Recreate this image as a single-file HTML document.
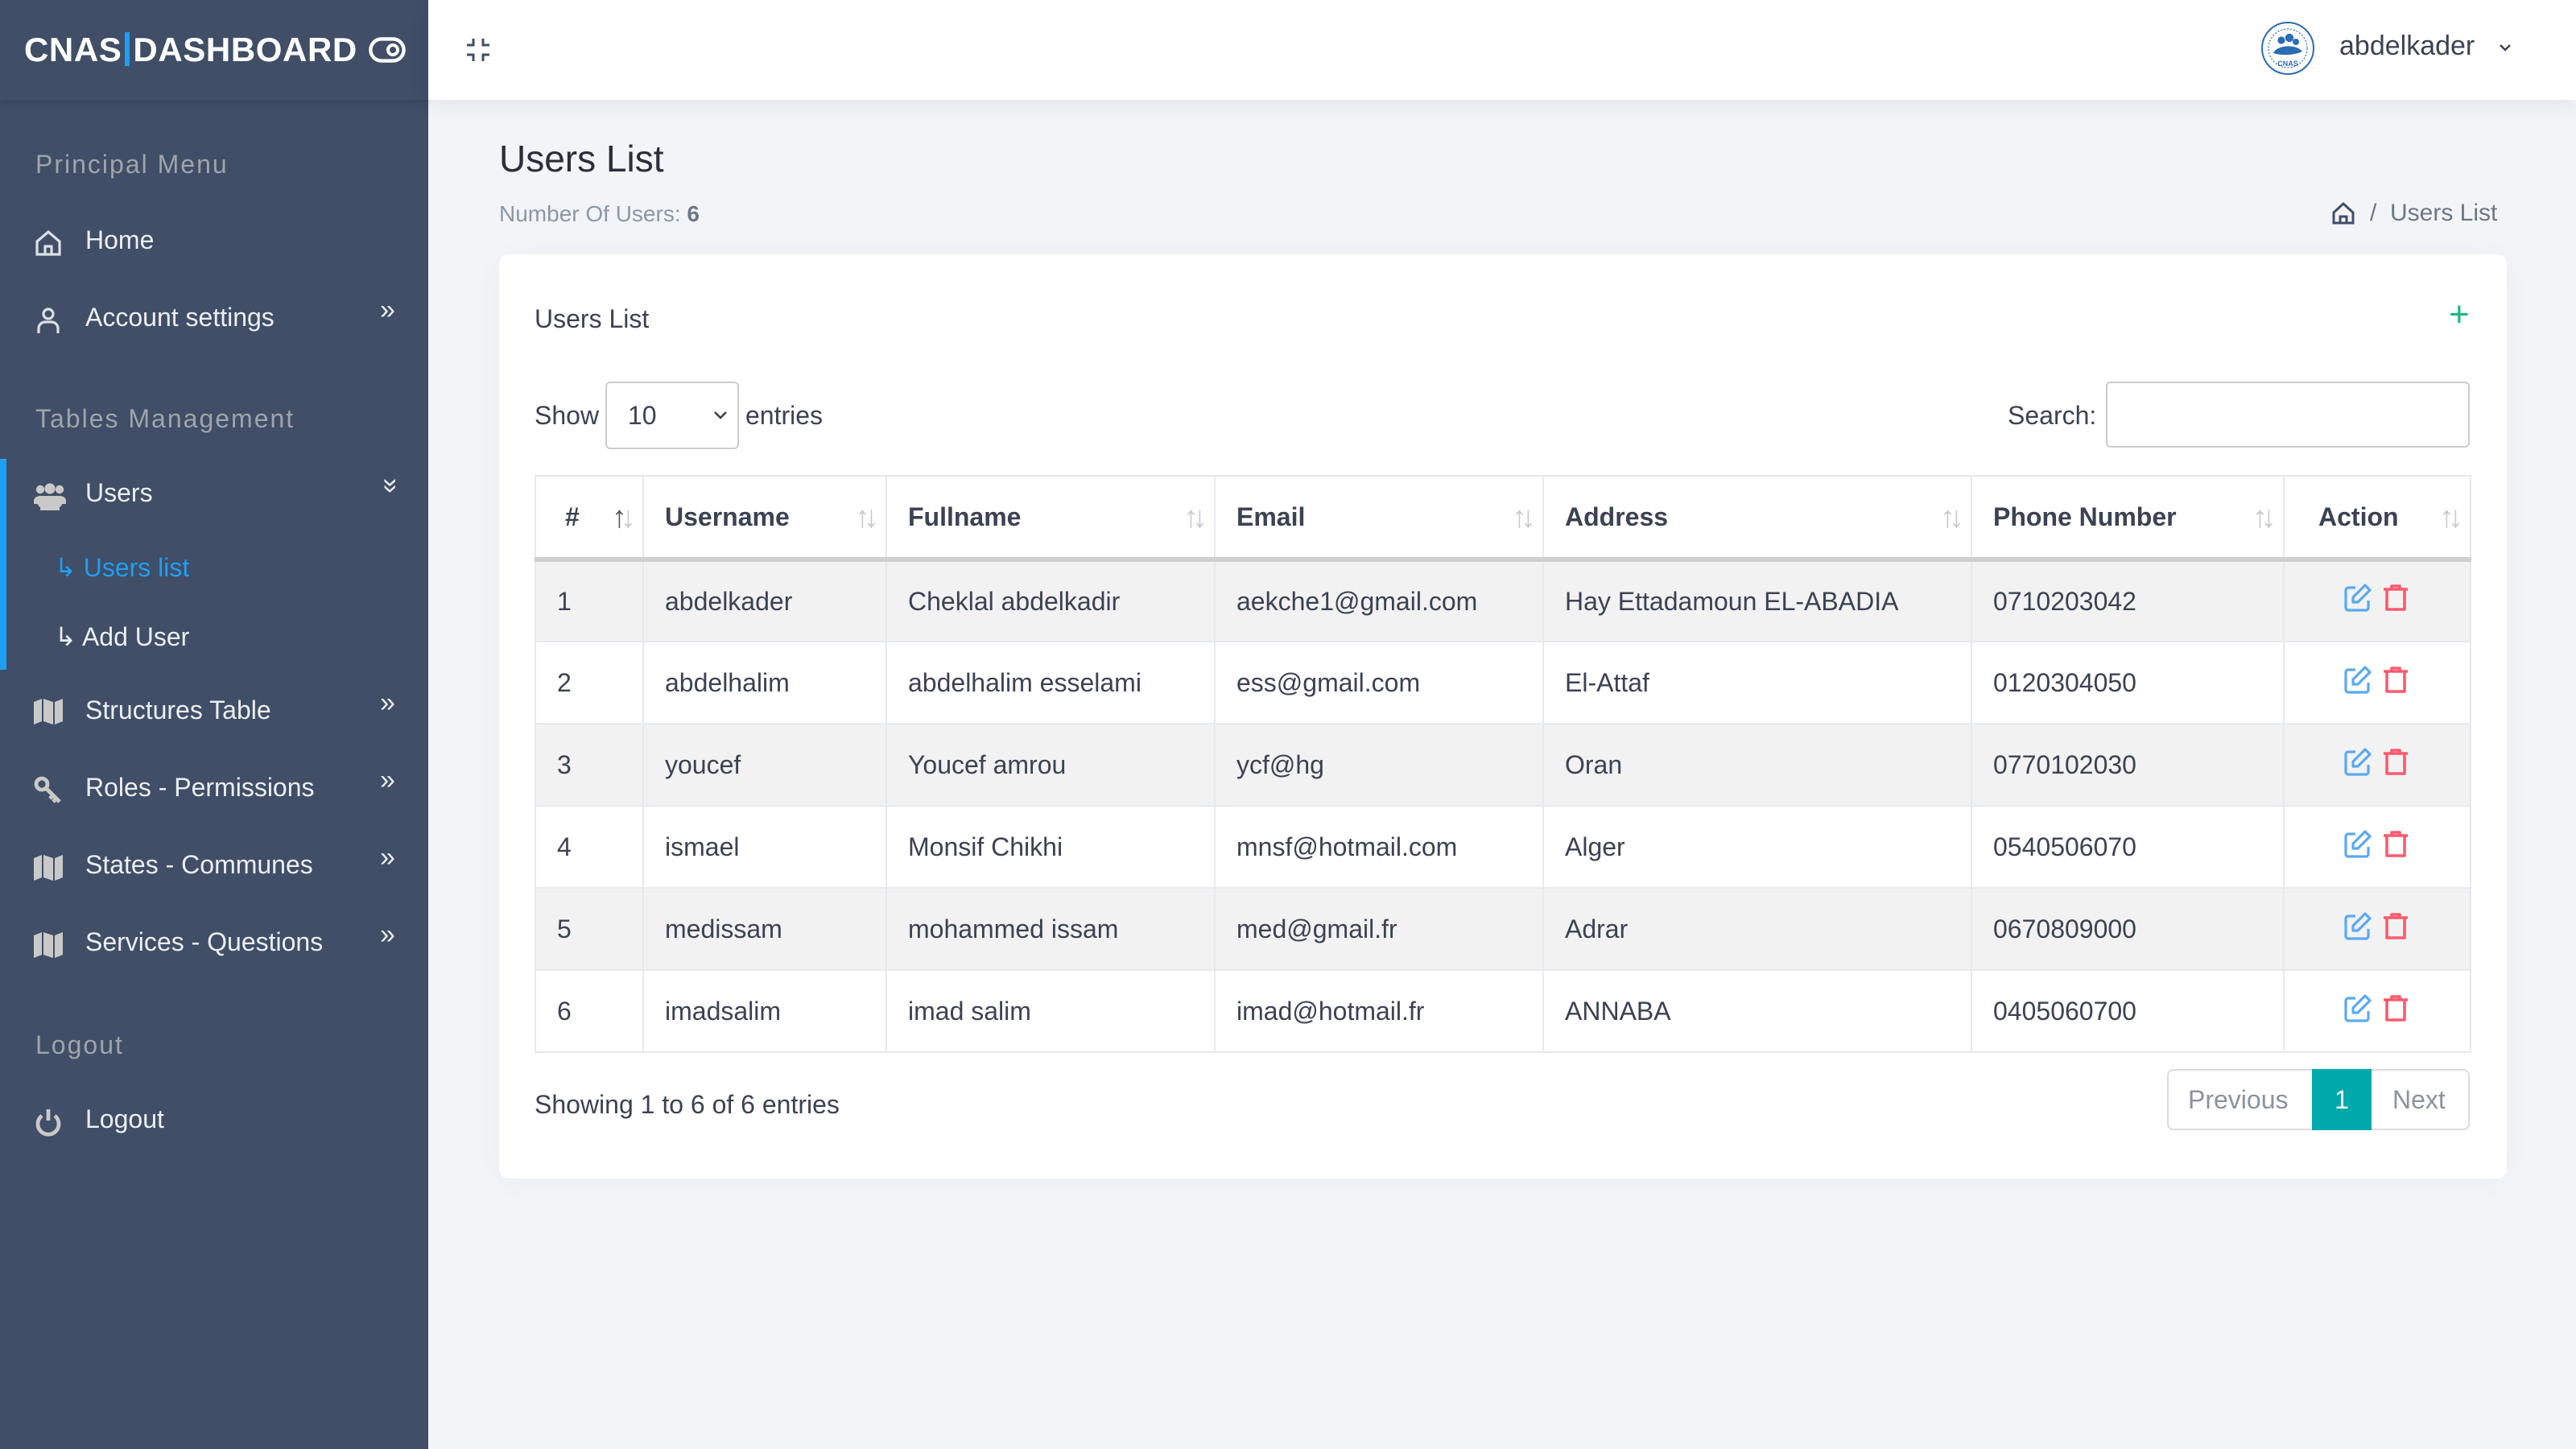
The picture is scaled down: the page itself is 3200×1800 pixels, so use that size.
<!DOCTYPE html>
<html><head><meta charset="utf-8">
<style>
*{box-sizing:border-box;margin:0;padding:0}
html,body{width:3200px;height:1800px;overflow:hidden;background:#f3f4f8}
#root{zoom:2;width:1600px;height:900px;position:relative;font-family:"Liberation Sans",sans-serif;color:#3b4254;background:#f3f4f8}
.abs{position:absolute}
#side{left:0;top:0;width:266px;height:900px;background:#404e67}
#side .hdr{left:0;top:0;width:266px;height:62px;background:#404e67;box-shadow:0 2px 4px rgba(0,0,0,.12)}
.logo{left:15px;top:19px;font-weight:bold;font-size:21px;color:#fff;letter-spacing:0.3px}
.logo i{display:inline-block;width:3px;height:21px;background:#1e9ff2;vertical-align:-3px;margin:0 2px}
.sec{left:22px;font-size:16px;color:#9fa4ab;letter-spacing:1px}
.it{left:53px;font-size:16px;color:#eceff3}
.ic{left:21px;width:18px;height:18px}
.chev{left:236px;font-size:17px;color:#eceff3}
#top{left:266px;top:0;width:1334px;height:62px;background:#fff;box-shadow:0 3px 12px rgba(0,0,0,.07)}
.card{left:310px;top:158px;width:1247px;height:574px;background:#fff;border-radius:6px;box-shadow:0 2px 18px rgba(0,0,0,.03)}
table{position:absolute;left:332px;top:295px;width:1202px;border-collapse:collapse;font-size:16px;table-layout:fixed}
td,th{border:1px solid #e6e9ee;padding:0 0 0 13px;text-align:left;height:51px;color:#3b4254}
th{height:52px;font-weight:bold;position:relative;border-bottom:3px solid #cfcfcf}
th .s{position:absolute;right:8px;top:15px;font-weight:normal;color:#c6c9ce;font-size:19px;letter-spacing:-4px}
tbody tr:nth-child(odd) td{background:#f2f2f2}
.act{text-align:left;padding-left:36px;color:transparent!important}
</style></head><body><div id="root">
<div id="side" class="abs">
 <div class="hdr abs"></div>
 <div class="logo abs">CNAS<i></i>DASHBOARD</div>
 <svg class="abs" style="left:229px;top:23px" width="23" height="16" viewBox="0 0 23 16"><rect x="1.2" y="1.2" width="20.6" height="13.6" rx="6.8" fill="none" stroke="#fff" stroke-width="2.2"/><circle cx="15" cy="8" r="3" fill="none" stroke="#fff" stroke-width="2"/></svg>
 <div class="sec abs" style="top:93px">Principal Menu</div>
 <svg class="ic abs" style="top:142px" viewBox="0 0 18 18" fill="none" stroke="#dcdfe4" stroke-width="1.6"><path d="M2 8 9 2l7 6v8H2z"/><path d="M7 16v-5h4v5"/></svg>
 <div class="it abs" style="top:140px">Home</div>
 <svg class="ic abs" style="top:190px" viewBox="0 0 18 18" fill="none" stroke="#dcdfe4" stroke-width="1.6"><circle cx="9" cy="5" r="3"/><path d="M3 17v-3a4 4 0 0 1 4-4h4a4 4 0 0 1 4 4v3"/></svg>
 <div class="it abs" style="top:188px">Account settings</div>
 <div class="chev abs" style="top:183px">»</div>
 <div class="sec abs" style="top:251px">Tables Management</div>
 <div class="abs" style="left:0;top:285px;width:4px;height:131px;background:#1e9ff2"></div>
 <svg class="ic abs" style="top:299px;width:20px" viewBox="0 0 20 18" fill="#c9c9c9"><circle cx="4" cy="5" r="2.6"/><circle cx="16" cy="5" r="2.6"/><circle cx="10" cy="4.5" r="3.3"/><path d="M0 12a4 3 0 0 1 4-3h12a4 3 0 0 1 4 3v2H0z"/><path d="M4 16a3 3 0 0 1 3-6h6a3 3 0 0 1 3 6v2H4z"/></svg>
 <div class="it abs" style="top:297px">Users</div>
 <div class="chev abs" style="top:292px;transform:rotate(90deg);left:238px">»</div>
 <div class="abs" style="left:34px;top:343px;font-size:16px;color:#1e9ff2">↳ Users list</div>
 <div class="abs" style="left:34px;top:386px;font-size:16px;color:#eceff3">↳ Add User</div>
 <svg class="ic abs" style="top:433px" viewBox="0 0 18 18" fill="#c9c9c9"><path d="M0 3l5-2v14l-5 2zM6 1l6 2v14l-6-2zM13 3l5-2v14l-5 2z"/></svg>
 <div class="it abs" style="top:432px">Structures Table</div><div class="chev abs" style="top:427px">»</div>
 <svg class="ic abs" style="top:482px" viewBox="0 0 18 18" fill="none" stroke="#c9c9c9" stroke-width="2.4"><circle cx="5" cy="5" r="3.5"/><path d="M8 8l8 8M12 12l-2 2M14 14l-2 2"/></svg>
 <div class="it abs" style="top:480px">Roles - Permissions</div><div class="chev abs" style="top:475px">»</div>
 <svg class="ic abs" style="top:530px" viewBox="0 0 18 18" fill="#c9c9c9"><path d="M0 3l5-2v14l-5 2zM6 1l6 2v14l-6-2zM13 3l5-2v14l-5 2z"/></svg>
 <div class="it abs" style="top:528px">States - Communes</div><div class="chev abs" style="top:523px">»</div>
 <svg class="ic abs" style="top:578px" viewBox="0 0 18 18" fill="#c9c9c9"><path d="M0 3l5-2v14l-5 2zM6 1l6 2v14l-6-2zM13 3l5-2v14l-5 2z"/></svg>
 <div class="it abs" style="top:576px">Services - Questions</div><div class="chev abs" style="top:571px">»</div>
 <div class="sec abs" style="top:640px">Logout</div>
 <svg class="ic abs" style="top:688px" viewBox="0 0 18 18" fill="none" stroke="#c9c9c9" stroke-width="2.4"><path d="M5 5a6.5 6.5 0 1 0 8 0"/><path d="M9 1v7"/></svg>
 <div class="it abs" style="top:686px">Logout</div>
</div>
<div id="top" class="abs"></div>
<svg class="abs" style="left:289px;top:23px" width="16" height="16" viewBox="0 0 16 16" fill="none" stroke="#404e67" stroke-width="1.5"><path d="M5 1v4H1M11 1v4h4M5 15v-4H1M11 15v-4h4"/></svg>
<svg class="abs" style="left:1404px;top:13px" width="34" height="34" viewBox="0 0 34 34"><circle cx="17" cy="17" r="16" fill="#fff" stroke="#2a6db5" stroke-width="1"/><circle cx="17" cy="17" r="12" fill="none" stroke="#2a6db5" stroke-width=".6" stroke-dasharray="1 1"/><circle cx="13" cy="12" r="2.3" fill="#2a6db5"/><circle cx="18" cy="10.5" r="2.6" fill="#2a6db5"/><circle cx="22" cy="13" r="2" fill="#2a6db5"/><path d="M8 20c2-5 14-6 18-1-4 2-12 3-18 1z" fill="#2a6db5"/><text x="17" y="28" font-size="4.5" font-weight="bold" fill="#2a6db5" text-anchor="middle" font-family="Liberation Sans">CNAS</text></svg>
<div class="abs" style="left:1453px;top:19px;font-size:17px;color:#3b4254">abdelkader</div>
<svg class="abs" style="left:1552px;top:27px" width="8" height="6" viewBox="0 0 8 6" fill="none" stroke="#3b4254" stroke-width="1.2"><path d="M1 1l3 3 3-3"/></svg>

<div class="abs" style="left:310px;top:85px;font-size:23px;color:#2a2e3b">Users List</div>
<div class="abs" style="left:310px;top:125px;font-size:14px;color:#8a97a6">Number Of Users: <b style="color:#6b7785">6</b></div>
<svg class="abs" style="left:1448px;top:125px" width="15" height="15" viewBox="0 0 15 15" fill="none" stroke="#404e67" stroke-width="1.5"><path d="M1.5 7 7.5 1.5 13.5 7v6.5h-12z"/><path d="M5.5 13.5v-4h4v4"/></svg>
<div class="abs" style="left:1472px;top:124px;font-size:15px;color:#6b7785">/ &nbsp;Users List</div>

<div class="card abs"></div>
<div class="abs" style="left:332px;top:189px;font-size:16px;color:#3b4254">Users List</div>
<div class="abs" style="left:1521px;top:183px;font-size:22px;color:#19b97f">+</div>
<div class="abs" style="left:332px;top:249px;font-size:16px">Show</div>
<div class="abs" style="left:376px;top:237px;width:83px;height:42px;border:1px solid #ccc;border-radius:3px;background:#fff"></div>
<div class="abs" style="left:390px;top:249px;font-size:16px">10</div>
<svg class="abs" style="left:443px;top:255px" width="9" height="6" viewBox="0 0 9 6" fill="none" stroke="#3b4254" stroke-width="1.3"><path d="M1 1l3.5 3.5L8 1"/></svg>
<div class="abs" style="left:463px;top:249px;font-size:16px">entries</div>
<div class="abs" style="left:1247px;top:249px;font-size:16px">Search:</div>
<div class="abs" style="left:1308px;top:237px;width:226px;height:41px;border:1px solid #ccc;border-radius:3px;background:#fff"></div>

<table>
<colgroup><col style="width:67px"><col style="width:151px"><col style="width:204px"><col style="width:204px"><col style="width:266px"><col style="width:194px"><col style="width:116px"></colgroup>
<thead><tr><th style="padding-left:18px">#<span class="s" style="color:#555">↑<span style="color:#c6c9ce">↓</span></span></th><th>Username<span class="s">↑↓</span></th><th>Fullname<span class="s">↑↓</span></th><th>Email<span class="s">↑↓</span></th><th>Address<span class="s">↑↓</span></th><th>Phone Number<span class="s">↑↓</span></th><th style="padding-left:21px">Action<span class="s">↑↓</span></th></tr></thead>
<tbody>
<tr><td>1</td><td>abdelkader</td><td>Cheklal abdelkadir</td><td>aekche1@gmail.com</td><td>Hay Ettadamoun EL-ABADIA</td><td>0710203042</td><td class="act">E</td></tr>
<tr><td>2</td><td>abdelhalim</td><td>abdelhalim esselami</td><td>ess@gmail.com</td><td>El-Attaf</td><td>0120304050</td><td class="act">E</td></tr>
<tr><td>3</td><td>youcef</td><td>Youcef amrou</td><td>ycf@hg</td><td>Oran</td><td>0770102030</td><td class="act">E</td></tr>
<tr><td>4</td><td>ismael</td><td>Monsif Chikhi</td><td>mnsf@hotmail.com</td><td>Alger</td><td>0540506070</td><td class="act">E</td></tr>
<tr><td>5</td><td>medissam</td><td>mohammed issam</td><td>med@gmail.fr</td><td>Adrar</td><td>0670809000</td><td class="act">E</td></tr>
<tr><td>6</td><td>imadsalim</td><td>imad salim</td><td>imad@hotmail.fr</td><td>ANNABA</td><td>0405060700</td><td class="act">E</td></tr>
</tbody></table>

<div class="abs" style="left:332px;top:677px;font-size:16px">Showing 1 to 6 of 6 entries</div>
<div class="abs" style="left:1346px;top:664px;width:188px;height:38px;border:1px solid #dcdcdc;border-radius:4px;background:#fff"></div>
<div class="abs" style="left:1359px;top:674px;font-size:16px;color:#8a939c">Previous</div>
<div class="abs" style="left:1436px;top:664px;width:37px;height:38px;background:#00a9ac;color:#fff;font-size:16px;text-align:center;line-height:38px">1</div>
<div class="abs" style="left:1486px;top:674px;font-size:16px;color:#8a939c">Next</div>

<svg width="0" height="0" style="position:absolute"><defs>
<g id="ed"><path d="M8 3H3.5a1.5 1.5 0 0 0-1.5 1.5v11A1.5 1.5 0 0 0 3.5 17h11a1.5 1.5 0 0 0 1.5-1.5V11" fill="none" stroke="#5aa9f2" stroke-width="1.6"/><path d="M14 1.5l3 3-7.5 7.5H6.5V9z" fill="none" stroke="#5aa9f2" stroke-width="1.6" stroke-linejoin="round"/></g>
<g id="tr"><path d="M1.5 4h15M6.5 4V2h5v2M3.5 4v12.5h11V4" fill="none" stroke="#fb5a6e" stroke-width="1.8" stroke-linejoin="round"/></g>
</defs></svg>
<div class="abs" style="left:1455px;top:362px"><svg width="19" height="19" viewBox="0 0 19 19"><use href="#ed"/></svg><svg style="margin-left:5px" width="18" height="19" viewBox="0 0 18 19"><use href="#tr"/></svg></div>
<div class="abs" style="left:1455px;top:413px"><svg width="19" height="19" viewBox="0 0 19 19"><use href="#ed"/></svg><svg style="margin-left:5px" width="18" height="19" viewBox="0 0 18 19"><use href="#tr"/></svg></div>
<div class="abs" style="left:1455px;top:464px"><svg width="19" height="19" viewBox="0 0 19 19"><use href="#ed"/></svg><svg style="margin-left:5px" width="18" height="19" viewBox="0 0 18 19"><use href="#tr"/></svg></div>
<div class="abs" style="left:1455px;top:515px"><svg width="19" height="19" viewBox="0 0 19 19"><use href="#ed"/></svg><svg style="margin-left:5px" width="18" height="19" viewBox="0 0 18 19"><use href="#tr"/></svg></div>
<div class="abs" style="left:1455px;top:566px"><svg width="19" height="19" viewBox="0 0 19 19"><use href="#ed"/></svg><svg style="margin-left:5px" width="18" height="19" viewBox="0 0 18 19"><use href="#tr"/></svg></div>
<div class="abs" style="left:1455px;top:617px"><svg width="19" height="19" viewBox="0 0 19 19"><use href="#ed"/></svg><svg style="margin-left:5px" width="18" height="19" viewBox="0 0 18 19"><use href="#tr"/></svg></div>
</div></body></html>
